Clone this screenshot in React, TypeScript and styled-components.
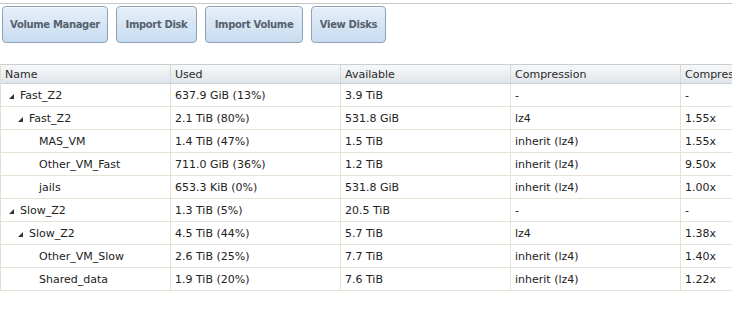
import React from "react";
import styled, { createGlobalStyle } from "styled-components";

const GlobalStyle = createGlobalStyle`
  html, body {
    margin: 0;
    padding: 0;
    background: #ffffff;
    overflow: hidden;
  }
  body {
    font-family: "DejaVu Sans", Verdana, sans-serif;
  }
`;

const Page = styled.div`
  width: 732px;
  height: 309px;
  overflow: hidden;
  padding-top: 3px;
  box-sizing: border-box;
`;

const Toolbar = styled.div`
  display: flex;
  gap: 8px;
  border-top: 1px solid #c8c8c8;
  padding: 2px 0 0 2px;
  height: 61px;
  box-sizing: border-box;
`;

const ToolButton = styled.button<{ $w: number }>`
  width: ${(p) => p.$w}px;
  height: 37px;
  border: 1px solid #8da2b7;
  border-radius: 4px;
  background: linear-gradient(#e6eff8, #c8dcf0);
  color: #55616e;
  font-family: "DejaVu Sans", Verdana, sans-serif;
  font-weight: bold;
  font-size: 10px;
  letter-spacing: -0.35px;
  padding: 0;
  box-shadow: inset 0 1px 0 #f4f8fc;
`;

const Grid = styled.div`
  display: grid;
  grid-template-columns: repeat(5, 170px);
  width: 850px;
  border-left: 1px solid #e3ddd3;
`;

const HeadCell = styled.div`
  height: 20px;
  box-sizing: border-box;
  border-top: 1px solid #c9cfd6;
  border-bottom: 1px solid #c9cfd6;
  border-right: 1px solid #d3d8de;
  background: linear-gradient(#f7f7f7, #e1e6eb);
  display: flex;
  align-items: center;
  padding-left: 4px;
  font-size: 11px;
  color: #2a2a2a;
`;

const Cell = styled.div<{ $indent?: number }>`
  height: 23px;
  box-sizing: border-box;
  border-bottom: 1px solid #e8e1d6;
  border-right: 1px solid #e8e1d6;
  display: flex;
  align-items: center;
  padding-left: ${(p) => (p.$indent ?? 0) + 4}px;
  font-size: 11px;
  color: #222;
  white-space: nowrap;
`;

const Toggle = styled.span`
  display: inline-block;
  width: 0;
  height: 0;
  border-left: 5px solid transparent;
  border-bottom: 5px solid #333;
  margin: 2px 6px 0 0;
`;

type Row = {
  name: string;
  level: number;
  open?: boolean;
  used: string;
  avail: string;
  comp: string;
  ratio: string;
};

const rows: Row[] = [
  { name: "Fast_Z2", level: 0, open: true, used: "637.9 GiB (13%)", avail: "3.9 TiB", comp: "-", ratio: "-" },
  { name: "Fast_Z2", level: 1, open: true, used: "2.1 TiB (80%)", avail: "531.8 GiB", comp: "lz4", ratio: "1.55x" },
  { name: "MAS_VM", level: 2, used: "1.4 TiB (47%)", avail: "1.5 TiB", comp: "inherit (lz4)", ratio: "1.55x" },
  { name: "Other_VM_Fast", level: 2, used: "711.0 GiB (36%)", avail: "1.2 TiB", comp: "inherit (lz4)", ratio: "9.50x" },
  { name: "jails", level: 2, used: "653.3 KiB (0%)", avail: "531.8 GiB", comp: "inherit (lz4)", ratio: "1.00x" },
  { name: "Slow_Z2", level: 0, open: true, used: "1.3 TiB (5%)", avail: "20.5 TiB", comp: "-", ratio: "-" },
  { name: "Slow_Z2", level: 1, open: true, used: "4.5 TiB (44%)", avail: "5.7 TiB", comp: "lz4", ratio: "1.38x" },
  { name: "Other_VM_Slow", level: 2, used: "2.6 TiB (25%)", avail: "7.7 TiB", comp: "inherit (lz4)", ratio: "1.40x" },
  { name: "Shared_data", level: 2, used: "1.9 TiB (20%)", avail: "7.6 TiB", comp: "inherit (lz4)", ratio: "1.22x" },
];

const buttons = [
  { label: "Volume Manager", w: 106 },
  { label: "Import Disk", w: 81 },
  { label: "Import Volume", w: 98 },
  { label: "View Disks", w: 75 },
];

export default function App() {
  return (
    <Page>
      <GlobalStyle />
      <Toolbar>
        {buttons.map((b) => (
          <ToolButton key={b.label} $w={b.w}>
            {b.label}
          </ToolButton>
        ))}
      </Toolbar>
      <Grid>
        <HeadCell>Name</HeadCell>
        <HeadCell>Used</HeadCell>
        <HeadCell>Available</HeadCell>
        <HeadCell>Compression</HeadCell>
        <HeadCell>Compression Ratio</HeadCell>
        {rows.map((r, i) => (
          <React.Fragment key={i}>
            <Cell $indent={r.open ? 4 + r.level * 9 : 16 + r.level * 9}>
              {r.open && <Toggle />}
              {r.name}
            </Cell>
            <Cell>{r.used}</Cell>
            <Cell>{r.avail}</Cell>
            <Cell>{r.comp}</Cell>
            <Cell>{r.ratio}</Cell>
          </React.Fragment>
        ))}
      </Grid>
    </Page>
  );
}
